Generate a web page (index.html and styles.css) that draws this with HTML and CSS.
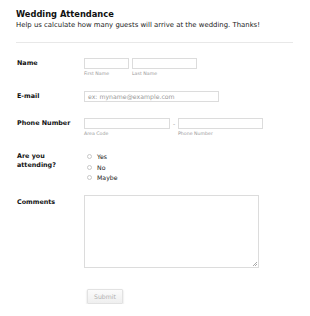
FILE: index.html
```html
<!DOCTYPE html>
<html>
<head>
<meta charset="utf-8">
<link rel="stylesheet" href="styles.css">
</head>
<body>
<div class="page">
  <div class="header">
    <div class="title">Wedding Attendance</div>
    <div class="subtitle">Help us calculate how many guests will arrive at the wedding. Thanks!</div>
  </div>
  <div class="divider"></div>

  <div class="row row-name">
    <div class="label">Name</div>
    <div class="field">
      <div class="group">
        <div class="sub">
          <div class="input w-first"></div>
          <div class="hint">First Name</div>
        </div>
        <div class="sub">
          <div class="input w-last"></div>
          <div class="hint">Last Name</div>
        </div>
      </div>
    </div>
  </div>

  <div class="row row-email">
    <div class="label">E-mail</div>
    <div class="field">
      <div class="input w-email"><span class="placeholder">ex: myname@example.com</span></div>
    </div>
  </div>

  <div class="row row-phone">
    <div class="label">Phone Number</div>
    <div class="field">
      <div class="group">
        <div class="sub">
          <div class="input w-area"></div>
          <div class="hint">Area Code</div>
        </div>
        <div class="dash">-</div>
        <div class="sub">
          <div class="input w-phone"></div>
          <div class="hint">Phone Number</div>
        </div>
      </div>
    </div>
  </div>

  <div class="row row-attend">
    <div class="label">Are you<br>attending?</div>
    <div class="field radios">
      <div class="radio"><span class="circle"></span>Yes</div>
      <div class="radio"><span class="circle"></span>No</div>
      <div class="radio"><span class="circle"></span>Maybe</div>
    </div>
  </div>

  <div class="row row-comments">
    <div class="label">Comments</div>
    <div class="field">
      <div class="textarea"><span class="grip"></span></div>
    </div>
  </div>

  <div class="row row-submit">
    <div class="label"></div>
    <div class="field">
      <div class="button">Submit</div>
    </div>
  </div>
</div>
</body>
</html>
```

FILE: styles.css
```css
html, body {
  margin: 0;
  padding: 0;
  background: #ffffff;
}

.page {
  padding: 9px 0 0 16px;
  width: 277px;
  font-family: Verdana, "DejaVu Sans", sans-serif;
  color: #000;
}

.title {
  font-size: 8.3px;
  font-weight: bold;
  line-height: 11px;
  color: #111;
}

.subtitle {
  font-size: 6.9px;
  line-height: 9px;
  color: #222;
  margin-top: 1px;
}

.divider {
  margin-top: 12px;
  height: 1px;
  background: #e8e8e8;
}

.row {
  display: flex;
}

.label {
  width: 68px;
  flex: none;
  font-size: 6.4px;
  font-weight: bold;
  line-height: 9px;
  color: #111;
  padding-left: 1px;
  box-sizing: border-box;
}

.field {
  flex: 1;
}

.group {
  display: flex;
  align-items: flex-start;
}

.sub {
  display: flex;
  flex-direction: column;
}

.input {
  height: 11px;
  box-sizing: border-box;
  border: 1px solid #dcdcdc;
  background: #fff;
  display: flex;
  align-items: center;
}

.w-first { width: 45px; margin-right: 3px; }
.w-last { width: 65px; }
.w-email { width: 135px; }
.w-area { width: 86px; }
.w-phone { width: 85px; }

.hint {
  font-size: 4.7px;
  line-height: 6px;
  color: #9a9a9a;
  margin-top: 2px;
}

.placeholder {
  font-size: 6.2px;
  color: #999999;
  padding-left: 3px;
  line-height: 9px;
}

.dash {
  width: 8px;
  text-align: center;
  font-size: 6px;
  color: #999;
  line-height: 11px;
}

.row-name { margin-top: 15px; }
.row-name .label { padding-top: 1px; }

.row-email { margin-top: 14px; }
.row-email .label { padding-top: 1px; }

.row-phone { margin-top: 16px; }
.row-phone .label { padding-top: 1px; }

.row-attend { margin-top: 15px; }
.row-attend .label { padding-top: 0; }

.radios {
  display: flex;
  flex-direction: column;
  gap: 1.5px;
  padding-left: 3px;
}

.radio {
  display: flex;
  align-items: center;
  font-size: 6.2px;
  line-height: 9px;
  color: #222;
}

.circle {
  width: 5px;
  height: 5px;
  border: 1px solid #c8c8c8;
  border-radius: 50%;
  box-sizing: border-box;
  margin-right: 5px;
  background: #fff;
}

.row-comments { margin-top: 13px; }
.row-comments .label { padding-top: 3px; }

.textarea {
  width: 175px;
  height: 73px;
  box-sizing: border-box;
  border: 1px solid #dcdcdc;
  position: relative;
  background: #fff;
}

.grip {
  position: absolute;
  right: 1px;
  bottom: 1px;
  width: 4px;
  height: 4px;
  background: linear-gradient(135deg, transparent 45%, #aaa 45%, #aaa 55%, transparent 55%, transparent 75%, #aaa 75%, #aaa 85%, transparent 85%);
}

.row-submit { margin-top: 21px; }

.button {
  margin-left: 3px;
  width: 36px;
  height: 15px;
  box-sizing: border-box;
  border: 1px solid #e2e2e2;
  border-radius: 1px;
  background: linear-gradient(#fbfbfb, #efefef);
  box-shadow: 0 1px 2px rgba(0,0,0,0.18);
  font-size: 6.2px;
  color: #b0b0b0;
  display: flex;
  align-items: center;
  justify-content: center;
}
```
